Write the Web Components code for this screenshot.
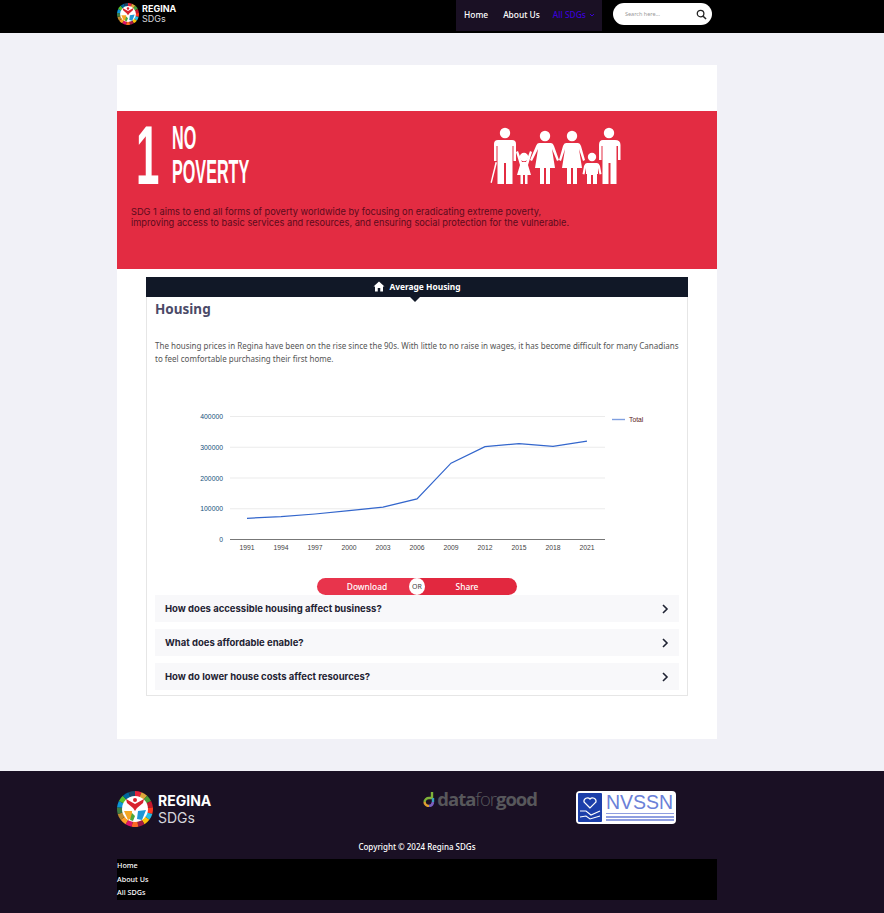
<!DOCTYPE html>
<html lang="en">
<head>
<meta charset="utf-8">
<title>Regina SDGs</title>
<style>
html, body { margin: 0; padding: 0; }
body { background: #f1f1f7; font-family: "Noto Sans", sans-serif; }
</style>
</head>
<body>
<site-header></site-header>
<page-card>
  <goal-banner></goal-banner>
  <data-panel heading="Average Housing" title="Housing">
    <span slot="intro">The housing prices in Regina have been on the rise since the 90s. With little to no raise in wages, it has become difficult for many Canadians to feel comfortable purchasing their first home.</span>
    <line-chart></line-chart>
    <action-buttons></action-buttons>
    <faq-row>How does accessible housing affect business?</faq-row>
    <faq-row>What does affordable enable?</faq-row>
    <faq-row>How do lower house costs affect resources?</faq-row>
  </data-panel>
</page-card>
<site-footer></site-footer>

<script>
function define(name, html, setup) {
  const template = document.createElement("template");
  template.innerHTML = html;
  customElements.define(name, class extends HTMLElement {
    constructor() {
      super();
      const root = this.attachShadow({ mode: "open" });
      root.appendChild(template.content.cloneNode(true));
      if (setup) setup(root, this);
    }
  });
}

// 17 goal colours round the wheel
const wheelColours = ["#e5243b","#dda63a","#4c9f38","#c5192d","#ff3a21","#26bde2","#fcc30b","#a21942","#fd6925","#dd1367","#fd9d24","#bf8b2e","#3f7e44","#0a97d9","#56c02b","#00689d","#19486a"];

define("sdg-wheel", `
<style>
:host { display: block; width: var(--size, 22px); height: var(--size, 22px); flex: none; }
svg { display: block; width: 100%; height: 100%; }
</style>
<svg viewBox="0 0 36 36"><g id="ring"></g>
  <circle cx="18" cy="18" r="13" fill="#fff"/>
  <path d="M9 8 L18 13 L27 8 L26 12 L20 17 L18 20 L16 17 L10 12 Z" fill="#d8232f"/>
  <circle cx="18" cy="9" r="2" fill="#d8232f"/>
  <path d="M7 20 L15 20 L15 27 L11 29 Z" fill="#f5a623"/>
  <path d="M29 19 L21 20 L20 28 L25 29 Z" fill="#1f97d4"/>
  <path d="M15 22 L18 25 L16 30 L13 29 Z" fill="#4aa83b"/>
</svg>`, (root) => {
  let out = "";
  wheelColours.forEach((c, i) => {
    const a = (i / 17) * Math.PI * 2 - Math.PI / 2;
    const b = ((i + 1) / 17) * Math.PI * 2 - Math.PI / 2;
    const p = (r, t) => (18 + r * Math.cos(t)).toFixed(2) + " " + (18 + r * Math.sin(t)).toFixed(2);
    out += `<path d="M18 18 L${p(18, a)} A18 18 0 0 1 ${p(18, b)} Z" fill="${c}"/>`;
  });
  root.getElementById("ring").innerHTML = out;
});

define("brand-logo", `
<style>
:host { display: flex; align-items: center; gap: var(--gap, 3px); color: #fff; font-family: Inter, sans-serif; }
.words { display: flex; flex-direction: column; line-height: var(--lh, 10px); font-size: var(--fs, 9px); }
b { font-weight: 700; }
span { color: #d6d6dc; font-weight: 400; }
</style>
<sdg-wheel></sdg-wheel>
<div class="words"><b>REGINA</b><span>SDGs</span></div>`);

define("site-header", `
<style>
:host { display: block; background: #000; height: 33px; }
.bar { width: 600px; margin-left: 117px; height: 33px; display: flex; align-items: flex-start; }
brand-logo { margin-top: 3px; --gap: 3px; }
nav { margin-left: auto; width: 146px; height: 31px; box-sizing: border-box; padding: 0 0 3px 8px; background: #1a1024; display: flex; align-items: center; gap: 15px; font: 500 8.4px "Noto Sans", sans-serif; color: #fff; }
.active { color: #3a00d6; display: flex; align-items: center; gap: 3px; margin-left: -2px; }
.active svg { width: 6px; height: 4px; margin-top: 2px; }
.search { margin: 3px 5px 0 11px; width: 99px; height: 22px; box-sizing: border-box; padding: 0 5px 0 12px; border-radius: 11px; background: #fff; display: flex; align-items: center; justify-content: space-between; font: 5.5px "Noto Sans", sans-serif; color: #999; }
.search svg { width: 11px; height: 11px; }
</style>
<div class="bar">
  <brand-logo></brand-logo>
  <nav><span>Home</span><span>About Us</span>
    <span class="active">All SDGs <svg viewBox="0 0 6 4"><path d="M1 1 L3 3 L5 1" fill="none" stroke="#3a00d6"/></svg></span></nav>
  <div class="search"><span>Search here...</span>
    <svg viewBox="0 0 12 12"><circle cx="5" cy="5" r="3.6" fill="none" stroke="#222" stroke-width="1.4"/><path d="M7.8 7.8 L11 11" stroke="#222" stroke-width="1.6"/></svg></div>
</div>`);

define("page-card", `
<style>
:host { display: block; width: 600px; height: 674px; margin: 32px 0 32px 117px; padding-top: 46px; box-sizing: border-box; background: #fff; }
</style>
<slot></slot>`);

define("family-icon", `
<style>
:host { display: block; width: 160px; height: 80px; flex: none; }
svg { display: block; width: 100%; height: 100%; }
</style>
<svg viewBox="0 0 160 80" fill="#fff">
  <circle cx="26" cy="17" r="5.2"/>
  <path d="M19 24 H33 Q37 24 37 28 V45 H34.5 V30 H33.5 V68 H27 V47 H25 V68 H18.5 V30 H17.5 V45 H15 V28 Q15 24 19 24 Z"/>
  <path d="M16.5 46 L18 46.4 L12.8 67 L11.5 66.6 Z"/>
  <circle cx="45" cy="41" r="4.2"/>
  <path d="M37 36 L39 35 L43 46 H47 L51 35 L53 36 L49 49 L52 59 H48.5 V68 H46 V59 H44 V68 H41.5 V59 H38 L41 49 Z"/>
  <circle cx="66" cy="20" r="5.2"/>
  <path d="M60 27 H72 Q74 27 75 30 L80 44 L78 45 L73 33 L76 52 H71 V68 H67 V52 H65 V68 H61 V52 H56 L59 33 L53 45 L51 44 L57 30 Q58 27 60 27 Z"/>
  <circle cx="93" cy="20" r="5.2"/>
  <path d="M87 27 H99 Q101 27 102 30 L106 44 L104 45 L100 33 L103 52 H98 V68 H94 V52 H92 V68 H88 V52 H83 L86 33 L82 45 L80 44 L84 30 Q85 27 87 27 Z"/>
  <circle cx="113" cy="41" r="4.2"/>
  <path d="M108 47 H118 Q120 47 121 50 L122.5 58 L120.5 58.5 L119 52 V58 H118 V68 H114 V59 H112 V68 H108 V58 H107 V52 L105.5 58.5 L103.5 58 L105 50 Q106 47 108 47 Z"/>
  <circle cx="130" cy="17" r="5.2"/>
  <path d="M124 24 H136 Q141.500 24 141.500 29 V44 H139 V30 H137.500 V68 H131.500 V47 H129.500 V68 H123.500 V30 H122.500 V44 H120 V29 Q120 24 124 24 Z"/>
</svg>`);

define("goal-banner", `
<style>
:host { display: block; background: #e32c42; height: 158px; box-sizing: border-box; padding: 0 14px; }
.top { display: flex; height: 88px; }
.num { width: 35px; margin-left: 5px; font: 700 84px/88px "Liberation Sans", sans-serif; color: #fff; transform: scaleX(.5); transform-origin: left top; }
.name { margin-left: 1px; font: 700 33px/34px "Liberation Sans", sans-serif; color: #fff; transform: scaleX(.49); transform-origin: left top; margin-top: 10px; white-space: nowrap; width: 80px; }
family-icon { margin: 5px 64px 0 auto; }
p { margin: 7px 0 0; font: 400 9.25px/11px Inter, sans-serif; color: #5c0b1c; }
</style>
<div class="top">
  <div class="num">1</div>
  <div class="name">NO<br>POVERTY</div>
  <family-icon></family-icon>
</div>
<p>SDG 1 aims to end all forms of poverty worldwide by focusing on eradicating extreme poverty,<br>improving access to basic services and resources, and ensuring social protection for the vulnerable.</p>`);

define("data-panel", `
<style>
:host { display: block; width: 542px; margin: 8px 0 0 29px; box-sizing: border-box; border: 1px solid #e6e6e6; border-top: 0; height: 419px; }
header { margin: 0 -1px; height: 20px; padding-bottom: 1px; box-sizing: border-box; background: #111827; color: #fff; display: flex; align-items: center; justify-content: center; gap: 4px; font: 700 8.4px "Noto Sans", sans-serif; position: relative; }
header svg { width: 12px; height: 11px; }
header::after { content: ""; position: absolute; left: 264px; bottom: -5px; border: 5px solid transparent; border-bottom: 0; border-top-color: #111827; }
.body { padding: 0 8px; }
h2 { margin: 3px 0 0; font: 700 13.500px/19px "Noto Sans", sans-serif; color: #4b4a68; }
p { margin: 20px -2px 0 0; font: 400 8px/13px "Noto Sans", sans-serif; color: #555; }
</style>
<header><svg viewBox="0 0 24 22"><path d="M12 1 L23 11 H20 V21 H14.500 V14 H9.500 V21 H4 V11 H1 Z" fill="#fff"/></svg><span id="heading"></span></header>
<div class="body">
  <h2 id="title"></h2>
  <p><slot name="intro"></slot></p>
  <slot></slot>
</div>`, (root, host) => {
  root.getElementById("heading").textContent = host.getAttribute("heading");
  root.getElementById("title").textContent = host.getAttribute("title");
});

const chartData = [[1991,69],[1994,74],[1997,83],[2000,94],[2003,105],[2006,132],[2009,248],[2012,302],[2015,312],[2018,303],[2021,320]];

define("line-chart", `
<style>
:host { display: block; width: 523px; height: 200px; margin-top: 13px; }
svg { display: block; }
text { font-family: "Liberation Sans", sans-serif; font-size: 6.8px; fill: #444; }
.yl { fill: #14507a; }
</style>
<svg id="plot" width="523" height="200" viewBox="0 0 523 200"></svg>`, (root) => {
  const x = (i) => 92 + i * 34;
  const y = (v) => 161.5 - v * 0.3075;
  let s = "";
  [400, 300, 200, 100].forEach((v) => {
    s += `<line x1="75" x2="450" y1="${y(v)}" y2="${y(v)}" stroke="#ebebeb"/>`;
  });
  [400, 300, 200, 100, 0].forEach((v) => {
    s += `<text class="yl" x="68" y="${y(v) + 2.5}" text-anchor="end">${v ? v * 1000 : 0}</text>`;
  });
  s += `<line x1="75" x2="450" y1="161.5" y2="161.5" stroke="#777"/>`;
  chartData.forEach((d, i) => {
    s += `<text x="${x(i)}" y="172" text-anchor="middle">${d[0]}</text>`;
  });
  s += `<polyline fill="none" stroke="#3366cc" stroke-width="1.2" points="${chartData.map((d, i) => x(i) + "," + y(d[1]).toFixed(1)).join(" ")}"/>`;
  s += `<line x1="457" x2="470" y1="41.500" y2="41.500" stroke="#7f9fe0" stroke-width="1.4"/>`;
  s += `<text x="474" y="44" style="fill:#5a2020">Total</text>`;
  root.getElementById("plot").innerHTML = s;
});

define("action-buttons", `
<style>
:host { display: flex; width: 200px; height: 17px; margin-left: 162px; position: relative; font: 500 8.4px "Noto Sans", sans-serif; color: #fff; }
span { flex: 1; display: flex; align-items: center; justify-content: center; }
.a { background: #e8344c; border-radius: 9px 0 0 9px; }
.b { background: #e2283f; border-radius: 0 9px 9px 0; }
i { position: absolute; left: 92px; top: 0; width: 16px; height: 17px; border-radius: 50%; background: #fff; color: #444; font: 400 7px/17px "Noto Sans", sans-serif; text-align: center; }
</style>
<span class="a">Download</span><span class="b">Share</span><i>OR</i>`);

define("faq-row", `
<style>
:host { display: flex; align-items: center; justify-content: space-between; height: 27px; margin-bottom: 7px; padding: 0 10px; box-sizing: border-box; background: #f8f8fa; font: 700 9.5px Inter, sans-serif; color: #1f2333; }
svg { width: 9px; height: 10px; }
</style>
<span><slot></slot></span>
<svg viewBox="0 0 9 10"><path d="M3 1 L7 5 L3 9" fill="none" stroke="#1f2333" stroke-width="1.6"/></svg>`);

define("site-footer", `
<style>
:host { display: block; background: #1a1024; height: 142px; overflow: hidden; }
.wrap { width: 600px; margin-left: 117px; }
.logos { display: flex; align-items: flex-start; height: 68px; padding-top: 20px; box-sizing: border-box; }
brand-logo { --size: 36px; --gap: 5px; --fs: 14px; --lh: 17px; }
.dfg { margin: 0 0 0 212px; font: 700 18.500px/16px "Open Sans", sans-serif; color: #57575b; letter-spacing: -1px; display: flex; align-items: center; gap: 2px; height: 16px; }
.dfg i { font-style: normal; font-weight: 300; }
.dfg svg { width: 12px; height: 15px; }
.nv { margin-left: auto; margin-right: 41px; width: 100px; height: 33px; border-radius: 4px; background: #fff; display: flex; box-sizing: border-box; padding: 2px 2px 2px 2px; gap: 4px; }
.nv svg { width: 24px; height: 29px; flex: none; }
.nv div { flex: 1; min-width: 0; }
.nv b { display: block; font: 400 19.500px/18px "Liberation Sans", sans-serif; color: #6a80d8; }
.nv u { display: block; height: 1.500px; background: #8f9ee0; margin-top: 1.800px; }
.copy { text-align: center; font: 500 8px/12px "Noto Sans", sans-serif; color: #fff; padding-top: 2px; }
ul { list-style: none; margin: 6px 0 0; padding: 0; height: 41px; background: #000; font: 500 7.2px/13.500px "Noto Sans", sans-serif; color: #fff; }
</style>
<div class="wrap">
  <div class="logos">
    <brand-logo></brand-logo>
    <div class="dfg"><svg viewBox="0 0 12 15"><path d="M9 0 V6 H6 A4.500 4.500 0 0 0 1.500 10" fill="none" stroke="#7fb23a" stroke-width="2.400"/><path d="M1.500 10 A4.500 4.500 0 0 0 6 14" fill="none" stroke="#e0a030" stroke-width="2.400"/><path d="M6 14 A4.500 4.500 0 0 0 10 10" fill="none" stroke="#7a5fc0" stroke-width="2.400"/><path d="M10 10 V6" fill="none" stroke="#3aa0c0" stroke-width="2.400"/></svg><span>data<i>for</i>good</span></div>
    <div class="nv">
      <svg viewBox="0 0 24 29"><rect width="24" height="29" rx="1" fill="#1c3faa"/><path d="M12 15 L6 9 A3.500 3.500 0 0 1 12 6 A3.500 3.500 0 0 1 18 9 Z" fill="none" stroke="#fff" stroke-width="1.200"/><path d="M2 18 L8 18 L13 22 L22 18 M2 24 L8 23 L12 26 L22 23" fill="none" stroke="#fff" stroke-width="1.100"/></svg>
      <div><b>NVSSN</b><u></u><u></u><u></u></div>
    </div>
  </div>
  <div class="copy">Copyright © 2024 Regina SDGs</div>
  <ul><li>Home</li><li>About Us</li><li>All SDGs</li></ul>
</div>`);
</script>
</body>
</html>
